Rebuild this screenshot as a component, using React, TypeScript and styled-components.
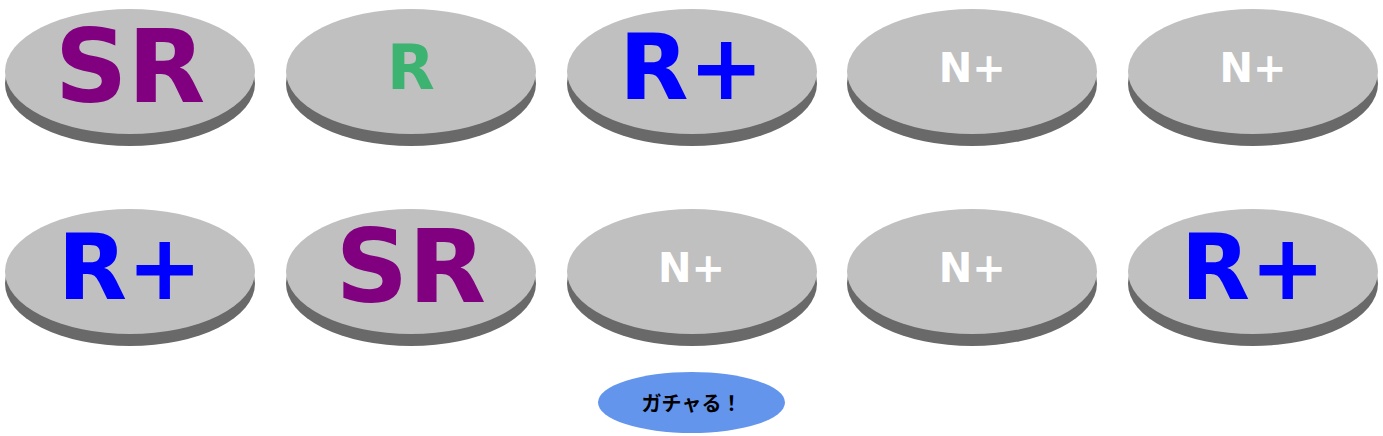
import styled, { createGlobalStyle } from "styled-components";

type Rarity = "SR" | "R+" | "R" | "N+";

const rarityStyle: Record<Rarity, { color: string; size: number }> = {
    SR: { color: "#800080", size: 101 },
    "R+": { color: "#0000ff", size: 90 },
    R: { color: "#3cb371", size: 62 },
    "N+": { color: "#ffffff", size: 40 },
};

const results: Rarity[] = ["SR", "R", "R+", "N+", "N+", "R+", "SR", "N+", "N+", "R+"];

const GlobalStyle = createGlobalStyle`
    body {
        margin: 0;
        background: #ffffff;
        font-family: "DejaVu Sans", "Noto Sans CJK JP", sans-serif;
    }
`;

function App() {
    return (
        <Page>
            <GlobalStyle />
            <CoinGrid>
                {results.map((rarity, i) => (
                    <Coin key={i} $rarity={rarity}>
                        {rarity}
                    </Coin>
                ))}
            </CoinGrid>
            <ButtonRow>
                <GachaButton type="button">ガチャる！</GachaButton>
            </ButtonRow>
        </Page>
    );
}

const Page = styled.div`
    padding: 9px 5px 0;
`;

const CoinGrid = styled.div`
    display: flex;
    flex-wrap: wrap;
    justify-content: space-between;
    row-gap: 75px;
`;

const Coin = styled.div<{ $rarity: Rarity }>`
    width: 250px;
    height: 125px;
    box-sizing: border-box;
    padding-bottom: 8px;
    border-radius: 50%;
    background: #c0c0c0;
    box-shadow: 0 12px 0 #696969;
    display: flex;
    align-items: center;
    justify-content: center;
    font-weight: bold;
    line-height: 1;
    color: ${(p) => rarityStyle[p.$rarity].color};
    font-size: ${(p) => rarityStyle[p.$rarity].size}px;
`;

const ButtonRow = styled.div`
    display: flex;
    justify-content: center;
    margin-top: 38px;
`;

const GachaButton = styled.button`
    width: 187px;
    height: 61px;
    border: none;
    border-radius: 50%;
    background: #6495ed;
    color: #000000;
    font-family: "Noto Sans CJK JP", sans-serif;
    font-size: 20px;
    font-weight: bold;
    padding: 0;
    cursor: pointer;
`;

export default App;
